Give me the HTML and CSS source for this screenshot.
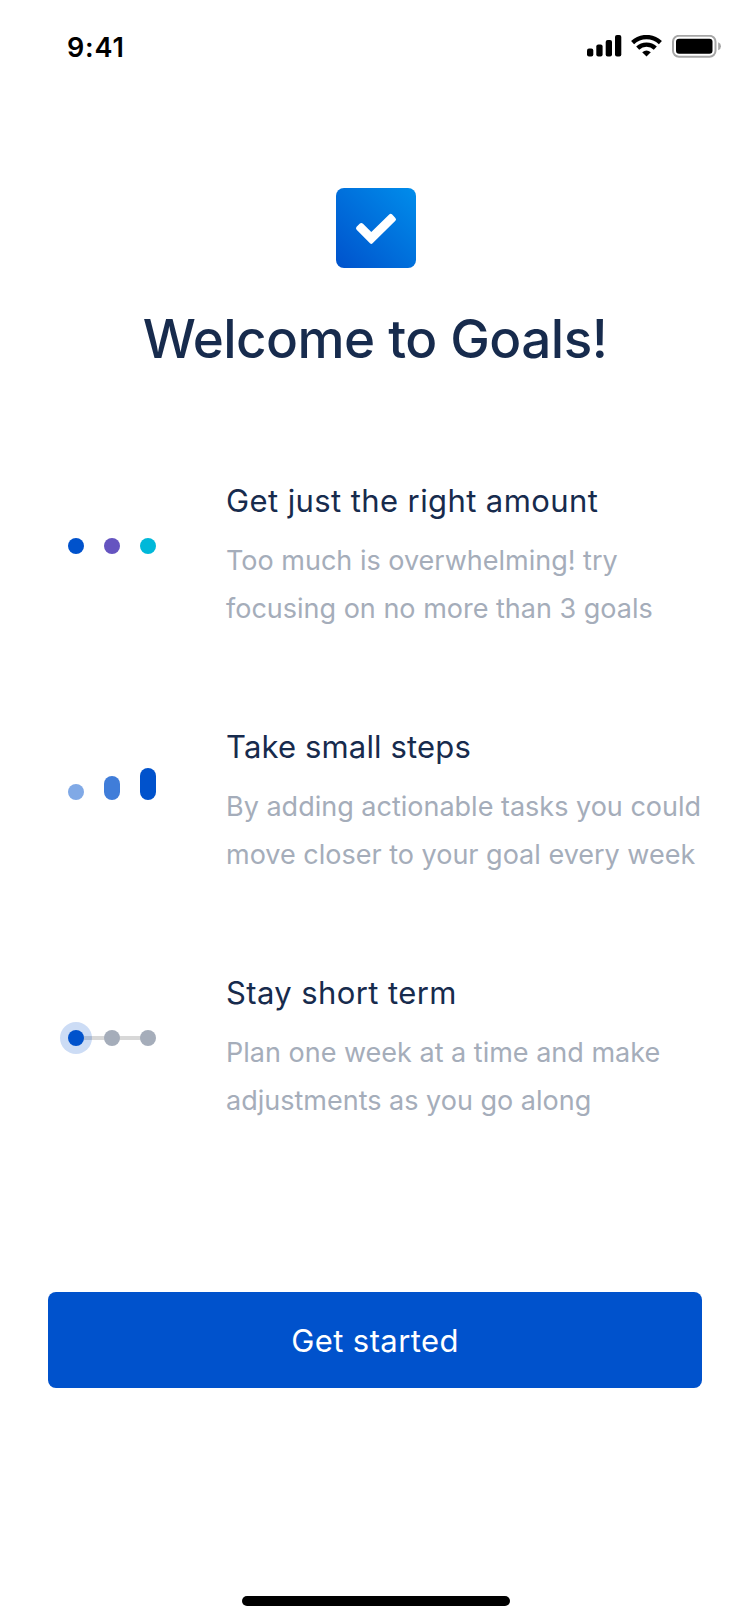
FILE: index.html
```html
<!DOCTYPE html>
<html lang="en">
<head>
<meta charset="utf-8">
<title>Welcome to Goals!</title>
<link rel="stylesheet" href="styles.css">
</head>
<body>
<div class="screen">
  <header class="status">
    <span class="time">9:41</span>
    <svg class="status-icons" width="136" height="24" viewBox="0 0 136 24">
      <rect x="0" y="13.5" width="6.3" height="8" rx="2"/>
      <rect x="9.3" y="9.5" width="6.3" height="12" rx="2"/>
      <rect x="18.7" y="5" width="6.3" height="16.5" rx="2"/>
      <rect x="28" y="0" width="6.3" height="21.5" rx="2"/>
      <g fill="none" stroke="#000" stroke-width="4.4">
        <path d="M45.6 7.600A20.200 20.200 0 0 1 73.400 7.600"/>
        <path d="M50.700 13.100A12.800 12.800 0 0 1 68.300 13.100"/>
      </g>
      <path d="M59.500 21.500L55.200 17.200Q59.500 13.600 63.800 17.200Z"/>
      <rect x="86" y="0.8" width="42.5" height="21" rx="6" fill="none" stroke="#a6a6a6" stroke-width="2"/>
      <rect x="89" y="3.8" width="36.5" height="15" rx="3"/>
      <path d="M131.200 7.300Q134 8.500 134 11.300T131.200 15.300Z" fill="#a6a6a6"/>
    </svg>
  </header>

  <main class="content">
    <svg class="logo" width="80" height="80" viewBox="0 0 80 80">
      <defs>
        <linearGradient id="brand" x1="0" y1="1" x2="1" y2="0">
          <stop offset="0" stop-color="#0052cc"/>
          <stop offset="1" stop-color="#008deb"/>
        </linearGradient>
      </defs>
      <rect width="80" height="80" rx="8" fill="url(#brand)"/>
      <path d="M23.600 35.800L20.600 38.800Q19.300 40.200 20.600 41.700L34 55.200Q35.300 56.600 36.600 55.200L59.400 32.800Q60.700 31.300 59.400 29.900L56.200 26.500Q54.700 25.200 53.200 26.500L35.300 44L27 35.800Q25.300 34.300 23.600 35.800Z" fill="#fff"/>
    </svg>
    <h1 class="title">Welcome to Goals!</h1>

    <section class="features">
      <article class="feature">
        <svg class="art" width="96" height="36" viewBox="0 0 96 36">
          <circle cx="16" cy="18" r="8" fill="#0052cc"/>
          <circle cx="52" cy="18" r="8" fill="#6554c0"/>
          <circle cx="88" cy="18" r="8" fill="#00b8d9"/>
        </svg>
        <div class="copy">
          <h2 class="heading">Get just the right amount</h2>
          <p class="text">Too much is overwhelming! try<br>focusing on no more than 3 goals</p>
        </div>
      </article>
      <article class="feature">
        <svg class="art" width="96" height="36" viewBox="0 0 96 36">
          <rect x="8" y="10" width="16" height="16" rx="8" fill="#80a9e6"/>
          <rect x="44" y="2" width="16" height="24" rx="8" fill="#407dd9"/>
          <rect x="80" y="-6" width="16" height="32" rx="8" fill="#0052cc"/>
        </svg>
        <div class="copy">
          <h2 class="heading heading-tight">Take small steps</h2>
          <p class="text">By adding actionable tasks you could<br>move closer to your goal every week</p>
        </div>
      </article>
      <article class="feature">
        <svg class="art" width="96" height="36" viewBox="0 0 96 36">
          <rect x="16" y="16" width="72" height="4" fill="#d8d8d8"/>
          <circle cx="16" cy="18" r="16" fill="#0052cc" fill-opacity=".2"/>
          <circle cx="16" cy="18" r="8" fill="#0052cc"/>
          <circle cx="52" cy="18" r="8" fill="#a5adba"/>
          <circle cx="88" cy="18" r="8" fill="#a5adba"/>
        </svg>
        <div class="copy">
          <h2 class="heading">Stay short term</h2>
          <p class="text">Plan one week at a time and make<br>adjustments as you go along</p>
        </div>
      </article>
    </section>

    <button class="start" type="button">Get started</button>
  </main>

  <div class="home-bar"></div>
</div>
</body>
</html>
```

FILE: styles.css
```css
* {
  box-sizing: border-box;
}

body {
  margin: 0;
  background: #fff;
  font-family: Inter, "Liberation Sans", sans-serif;
}

.screen {
  display: flex;
  flex-direction: column;
  width: 750px;
  height: 1624px;
  padding-bottom: 18px;
  overflow: hidden;
}

.status {
  display: flex;
  justify-content: space-between;
  height: 88px;
  padding: 0 27px 0 67px;
}

.time {
  margin-top: 32px;
  font-size: 27px;
  font-weight: 600;
  line-height: 32px;
  letter-spacing: 0.8px;
  color: #000;
}

.status-icons {
  margin-top: 35px;
}

.content {
  display: flex;
  flex-direction: column;
  flex: 1;
  padding: 100px 48px 0;
}

.logo {
  align-self: center;
  margin-left: 2px;
}

.title {
  margin: 39px 0 110px;
  font-size: 53px;
  font-weight: 500;
  line-height: 64px;
  letter-spacing: -0.55px;
  text-align: center;
  white-space: nowrap;
  color: #172b4d;
}

.features {
  display: flex;
  flex-direction: column;
  gap: 94px;
}

.feature {
  display: flex;
  gap: 70px;
  padding-left: 12px;
}

.art {
  flex: none;
  margin-top: 47px;
  overflow: visible;
}

.copy {
  white-space: nowrap;
}

.heading {
  margin: 0 0 16px;
  font-size: 31px;
  font-weight: 400;
  line-height: 40px;
  letter-spacing: 0.4px;
  color: #172b4d;
}

.heading-tight {
  letter-spacing: 0.15px;
}

.text {
  margin: 0;
  font-size: 27px;
  line-height: 48px;
  color: #a5adba;
}

.start {
  height: 96px;
  margin-top: 167px;
  padding: 1px 0 0;
  border: 0;
  border-radius: 8px;
  background: #0052cc;
  font-family: inherit;
  font-size: 31px;
  letter-spacing: 0.4px;
  color: #fff;
}

.home-bar {
  align-self: center;
  width: 268px;
  height: 10px;
  margin-left: 2px;
  border-radius: 5px;
  background: #000;
}
```
